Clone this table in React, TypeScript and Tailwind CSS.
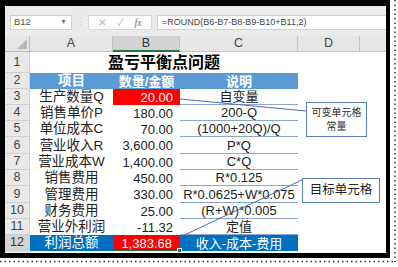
import React from "react";

type Row = {
  n: number;
  a: string;
  b: string;
  c: string;
  h: string;
  kind?: "head" | "total" | "red";
};

const rows: Row[] = [
  { n: 2, a: "项目", b: "数量/金额", c: "说明", h: "h-[16px]", kind: "head" },
  { n: 3, a: "生产数量Q", b: "20.00", c: "自变量", h: "h-[16px]", kind: "red" },
  { n: 4, a: "销售单价P", b: "180.00", c: "200-Q", h: "h-[16px]" },
  { n: 5, a: "单位成本C", b: "70.00", c: "(1000+20Q)/Q", h: "h-[16px]" },
  { n: 6, a: "营业收入R", b: "3,600.00", c: "P*Q", h: "h-[17px]" },
  { n: 7, a: "营业成本W", b: "1,400.00", c: "C*Q", h: "h-[16px]" },
  { n: 8, a: "销售费用", b: "450.00", c: "R*0.125", h: "h-[16px]" },
  { n: 9, a: "管理费用", b: "330.00", c: "R*0.0625+W*0.075", h: "h-[17px]" },
  { n: 10, a: "财务费用", b: "25.00", c: "(R+W)*0.005", h: "h-[16px]" },
  { n: 11, a: "营业外利润", b: "-11.32", c: "定值", h: "h-[16px]" },
  { n: 12, a: "利润总额", b: "1,383.68", c: "收入-成本-费用", h: "h-[16px]", kind: "total" },
];

function RowHeader({ n, active }: { n: number | string; active?: boolean }) {
  return (
    <div
      className={
        "w-[25px] shrink-0 border-r border-b border-[#cfcfcf] flex items-center justify-center text-[12.5px] leading-none " +
        (active ? "bg-[#d4d4d4] text-[#333]" : "bg-[#e9e9e9] text-[#444]")
      }
    >
      {n}
    </div>
  );
}

function DataRow({ r }: { r: Row }) {
  const head = r.kind === "head";
  const total = r.kind === "total";
  const aCls = head
    ? "bg-[#5b9bd5] text-white font-bold"
    : total
    ? "bg-[#0070c0] text-white"
    : "text-[#222]";
  const bCls = head
    ? "bg-[#5b9bd5] text-white font-bold justify-center"
    : total
    ? "bg-[#ff0000] text-white justify-end pr-[7px] border border-[#1d6b3f]"
    : r.kind === "red"
    ? "bg-[#ff0000] text-white justify-end pr-[7px]"
    : "text-[#222] justify-end pr-[7px]";
  const cCls = head
    ? "bg-[#5b9bd5] text-white font-bold"
    : total
    ? "bg-[#0070c0] text-white"
    : "text-[#222] border-b border-[#8ea6c9]";
  return (
    <div className={"flex shrink-0 " + r.h}>
      <RowHeader n={r.n} active={total} />
      <div className={"w-[83px] shrink-0 flex items-center justify-center text-[13.5px] leading-none " + aCls}>
        {r.a}
      </div>
      <div className={"relative w-[67px] shrink-0 flex items-center text-[13px] leading-none " + bCls}>
        {r.b}
        {total && (
          <div className="absolute -right-[3px] -bottom-[3px] w-[5px] h-[5px] bg-[#217346] border border-white" />
        )}
      </div>
      <div className={"w-[118px] shrink-0 flex items-center justify-center text-[13px] leading-none whitespace-nowrap " + cCls}>
        {r.c}
      </div>
      <div className="w-[62px] shrink-0" />
      <div className="flex-1" />
    </div>
  );
}

export default function App() {
  return (
    <div className="relative w-[398px] h-[267px] bg-white overflow-hidden font-['Liberation_Sans','Noto_Sans_CJK_SC',sans-serif]">
      <div className="w-[390px] h-[258px] bg-black pl-[5px] pt-[6px] pr-[4px] pb-[5px]">
        <div className="relative w-[381px] h-[247px] bg-white overflow-hidden flex flex-col">
          {/* formula bar */}
          <div className="h-[30px] shrink-0 bg-[#ebebeb] flex items-start pt-[9px] pl-[5px]">
            <div className="w-[62px] h-[15px] bg-white border border-[#d0d0d0] flex items-center justify-between pl-[3px] pr-[4px] text-[9.5px] text-[#555]">
              <span>B12</span>
              <span className="text-[7px] text-[#777]">▼</span>
            </div>
            <div className="w-[16px] h-[15px] flex items-center justify-center text-[9px] text-[#c4c4c4]">⋮</div>
            <div className="w-[64px] h-[15px] bg-white border border-[#d6d6d6] flex items-center justify-around px-[4px] text-[10px] text-[#b4b4b4]">
              <span>✕</span>
              <span>✓</span>
              <span className="italic font-['Liberation_Serif',serif] text-[#777]">fx</span>
            </div>
            <div className="ml-[5px] flex-1 h-[15px] bg-white border border-[#d0d0d0] border-r-0 flex items-center pl-[4px] text-[9px] text-[#444] whitespace-nowrap">
              =ROUND(B6-B7-B8-B9-B10+B11,2)
            </div>
          </div>
          {/* column headers */}
          <div className="h-[16px] shrink-0 flex bg-[#e6e6e6] text-[12.5px] leading-none text-[#444]">
            <div className="relative w-[25px] shrink-0 border-r border-b border-[#bcbcbc]">
              <svg className="absolute right-[2px] bottom-[2px]" width="10" height="10" viewBox="0 0 10 10">
                <polygon points="10,0 10,10 0,10" fill="#b8b8b8" />
              </svg>
            </div>
            <div className="w-[83px] shrink-0 border-r border-b border-[#c4c4c4] flex items-center justify-center">A</div>
            <div className="w-[67px] shrink-0 border-r border-[#c4c4c4] border-b-2 border-b-[#217346] bg-[#d3d3d3] flex items-center justify-center text-[#333]">B</div>
            <div className="w-[118px] shrink-0 border-r border-b border-[#c4c4c4] flex items-center justify-center">C</div>
            <div className="w-[62px] shrink-0 border-r border-b border-[#c4c4c4] flex items-center justify-center">D</div>
            <div className="flex-1 border-b border-[#c4c4c4]" />
          </div>
          {/* row 1 title */}
          <div className="h-[21px] shrink-0 flex">
            <RowHeader n={1} />
            <div className="w-[268px] shrink-0 flex items-center justify-center text-[16px] font-bold text-black leading-none">
              盈亏平衡点问题
            </div>
            <div className="flex-1" />
          </div>
          {rows.map((r) => (
            <DataRow key={r.n} r={r} />
          ))}
          <div className="flex-1 flex">
            <div className="w-[25px] shrink-0 bg-[#e9e9e9] border-r border-[#cfcfcf]" />
          </div>

          {/* connectors */}
          <svg className="absolute inset-0 pointer-events-none" width="381" height="247">
            <line x1="175" y1="93" x2="301" y2="105" stroke="#4a6fb5" strokeWidth="1" />
            <line x1="175" y1="231" x2="297" y2="174" stroke="#4a6fb5" strokeWidth="1" />
          </svg>

          {/* callouts */}
          <div className="absolute left-[301px] top-[96px] w-[61px] h-[35px] bg-white border border-[#5a7fc0] flex flex-col items-center justify-center text-[10px] leading-[14px] text-[#333]">
            <span>可变单元格</span>
            <span>常量</span>
          </div>
          <div className="absolute left-[297px] top-[172px] w-[78px] h-[25px] bg-white border border-[#5a7fc0] flex items-center justify-center text-[12.5px] text-[#222]">
            目标单元格
          </div>
        </div>
      </div>
      {/* dotted outer edges */}
      <svg className="absolute inset-0 pointer-events-none" width="398" height="267">
        <line x1="395" y1="0" x2="395" y2="262" stroke="#333" strokeWidth="1.5" strokeDasharray="1.5 3" />
        <line x1="0" y1="261.5" x2="396" y2="261.5" stroke="#333" strokeWidth="1.5" strokeDasharray="1.5 3" />
      </svg>
    </div>
  );
}
